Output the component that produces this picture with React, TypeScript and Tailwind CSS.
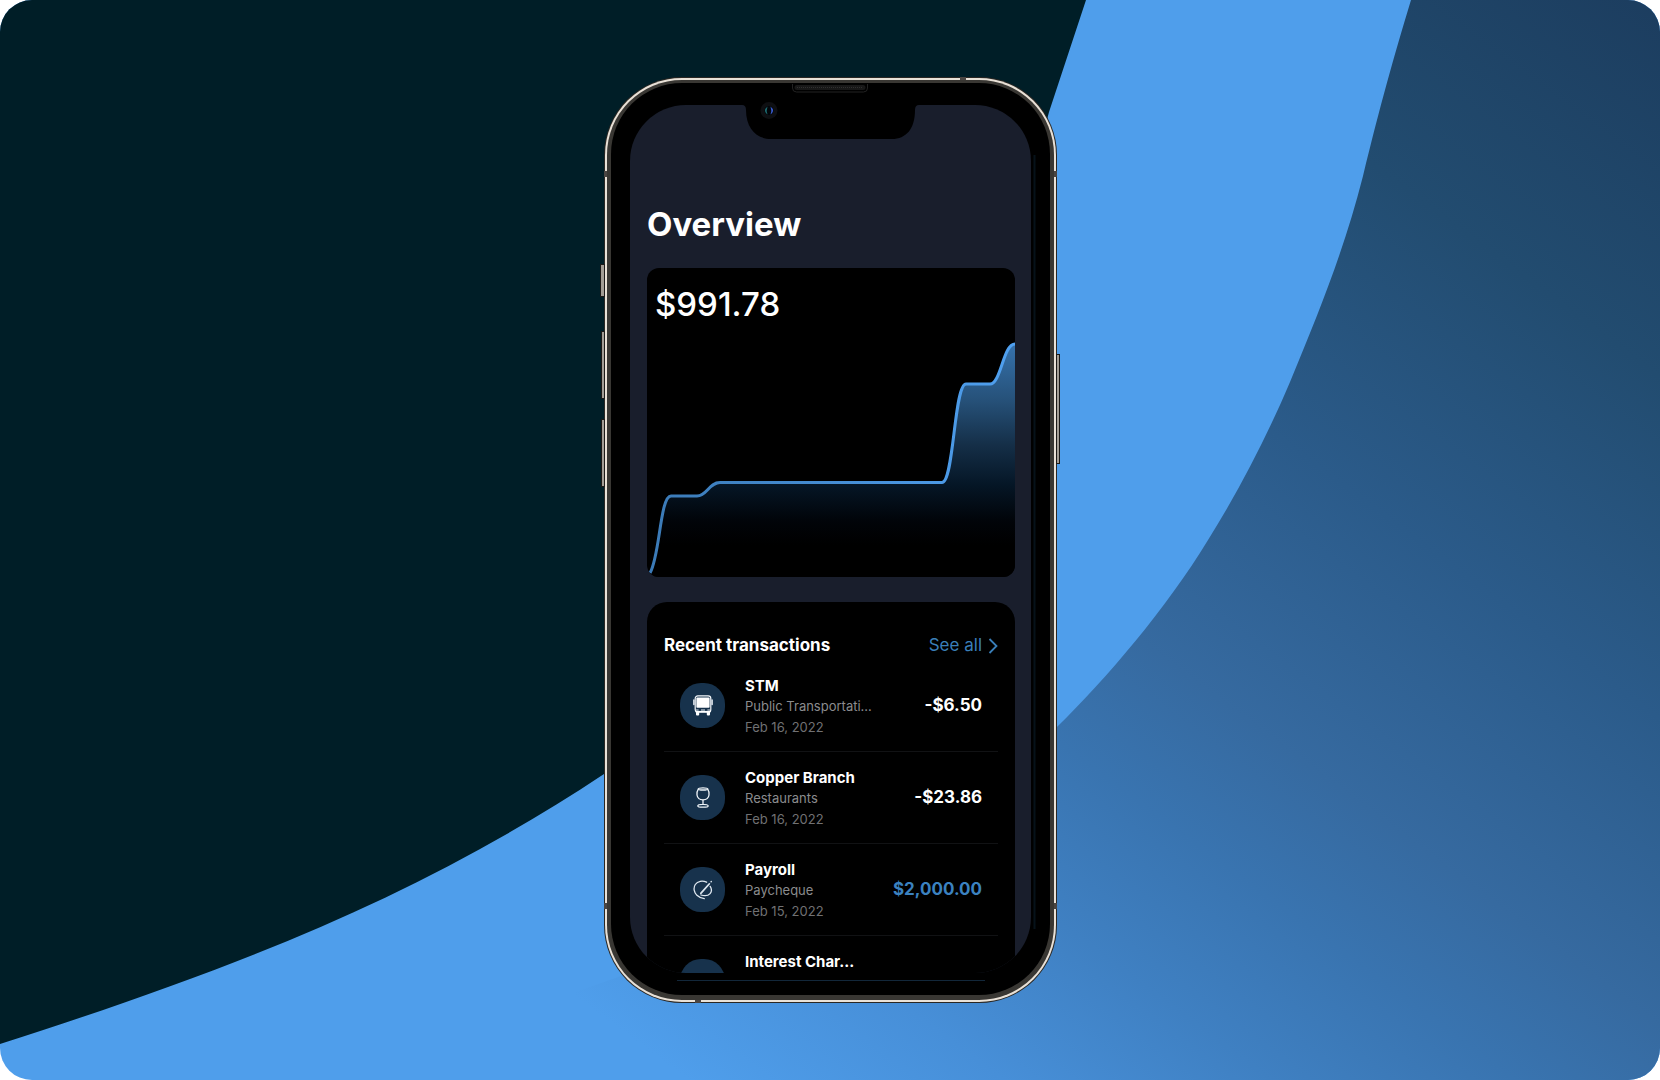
import React from "react";

type Transaction = {
  name: string;
  category?: string;
  date?: string;
  amount?: string;
  credit?: boolean;
  icon?: React.ReactNode;
};

const BusIcon = () => (
  <svg viewBox="0 0 20 21" className="h-[21px] w-5" aria-hidden="true">
    <rect x="2.2" y="0.8" width="15.6" height="16.4" rx="2.6" fill="none" stroke="#f4f7fa" strokeWidth="1.2" />
    <rect x="3.4" y="2.6" width="13.2" height="10.2" rx="0.8" fill="#fff" />
    <path d="M0.900 5v4.400M19.100 5v4.400" stroke="#e4eaf0" strokeWidth="1.500" strokeLinecap="round" />
    <path d="M3 15h2.600M8 15h4M14.400 15H17" stroke="#e4eaf0" strokeWidth="1" />
    <path d="M2.400 16.600h15.200" stroke="#fff" strokeWidth="1.400" />
    <path d="M3 17h3.200v2.600q0 1-1 1H4q-1 0-1-1zM13.800 17H17v2.600q0 1-1 1h-1.200q-1 0-1-1z" fill="#fff" />
  </svg>
);

const GlassIcon = () => (
  <svg viewBox="0 0 20 21" className="h-[21px] w-5" fill="none" stroke="#eef3f7" strokeWidth="1.300" aria-hidden="true">
    <path d="M5.400 1.800C4 4 3.700 6 4 8c.4 2.900 2.900 4.800 6 4.800s5.600-1.900 6-4.800c.3-2 0-4-1.400-6.200" />
    <ellipse cx="10" cy="1.900" rx="4.600" ry="1.100" />
    <path d="M10 12.800v5M4.800 18.900c0-.9 2.300-1.500 5.200-1.500s5.200.6 5.200 1.500-2.300 1.300-5.200 1.300-5.200-.4-5.200-1.300z" />
  </svg>
);

const PenIcon = () => (
  <svg viewBox="0 0 20 20" className="size-5" fill="none" stroke="#dde6ee" strokeWidth="1.300" strokeLinecap="round" aria-hidden="true">
    <path d="M13.600 2.200C9.400.2 4.600 1 2.300 4.500c-2.200 3.500-1.300 8 1.600 10.700 2.100 2 4.700 3 7.400 3.500" />
    <path d="M17.200 6.400c1.500 2.400 1.600 5.200-.1 7.200-1.800 2.100-5.400 2.500-9.200 1.400" />
    <path d="M7.800 13.400l8.600-9.600" strokeWidth="1.700" />
    <path d="M18.100 1.700l.2-.2" strokeWidth="1.500" />
  </svg>
);

const transactions: Transaction[] = [
  { name: "STM", category: "Public Transportati...", date: "Feb 16, 2022", amount: "-$6.50", icon: <BusIcon /> },
  { name: "Copper Branch", category: "Restaurants", date: "Feb 16, 2022", amount: "-$23.86", icon: <GlassIcon /> },
  { name: "Payroll", category: "Paycheque", date: "Feb 15, 2022", amount: "$2,000.00", credit: true, icon: <PenIcon /> },
  { name: "Interest Char..." },
];

function Backdrop() {
  return (
    <svg viewBox="0 0 1660 1080" preserveAspectRatio="none" className="absolute inset-0 h-full w-full" aria-hidden="true">
      <defs>
        <linearGradient id="dusk" gradientUnits="userSpaceOnUse" x1="580" y1="1000" x2="1441" y2="-163">
          <stop offset="0" stopColor="#4f9eeb" />
          <stop offset="0.130" stopColor="#478fd8" />
          <stop offset="0.240" stopColor="#3f80c2" />
          <stop offset="0.340" stopColor="#3974b0" />
          <stop offset="0.430" stopColor="#366aa0" />
          <stop offset="0.600" stopColor="#2b5b8a" />
          <stop offset="0.790" stopColor="#224c70" />
          <stop offset="1" stopColor="#1c3d5f" />
        </linearGradient>
      </defs>
      <rect width="1660" height="1080" fill="#4f9eeb" />
      <path
        d="M1411 0C1394 56 1380 106 1363 176C1344 250 1321 307 1290 382C1268 434 1240 489 1208 540C1166 609 1106 679 1058 726C940 836 780 922 567 995L567 1080H1660V0Z"
        fill="url(#dusk)"
      />
      <path d="M0 0H1086L1049 112C970 420 860 590 604 774C420 896 240 967 0 1044Z" fill="#001e27" />
    </svg>
  );
}

function BalanceChart() {
  return (
    <svg viewBox="0 0 368 247" preserveAspectRatio="none" className="block h-[247px] w-full" role="img" aria-label="Balance over time">
      <defs>
        <linearGradient id="area" x1="0" y1="14" x2="0" y2="215" gradientUnits="userSpaceOnUse">
          <stop offset="0" stopColor="#3672ac" />
          <stop offset="0.280" stopColor="#265179" />
          <stop offset="0.500" stopColor="#152f48" />
          <stop offset="0.700" stopColor="#051626" />
          <stop offset="0.880" stopColor="#010409" />
          <stop offset="1" stopColor="#000" />
        </linearGradient>
        <linearGradient id="line" x1="0" y1="0" x2="368" y2="0" gradientUnits="userSpaceOnUse">
          <stop offset="0" stopColor="#3b7ab6" />
          <stop offset="1" stopColor="#4fa0f0" />
        </linearGradient>
      </defs>
      <path
        d="M3 243C13 226 13 166 24 166H50C60 166 62 152.500 73 152.500H295C307 152.500 307 54 319 54H343C354 54 356 14 368 14V247H3Z"
        fill="url(#area)"
      />
      <path
        d="M3 243C13 226 13 166 24 166H50C60 166 62 152.500 73 152.500H295C307 152.500 307 54 319 54H343C354 54 356 14 368 14"
        fill="none"
        stroke="url(#line)"
        strokeWidth="3"
      />
    </svg>
  );
}

function TransactionRow({ name, category, date, amount, credit, icon }: Transaction) {
  return (
    <li className="flex h-[92px] items-center border-b border-[#111214] px-4">
      <div className="flex size-[45px] shrink-0 items-center justify-center rounded-[21px] bg-[#17324c]">{icon}</div>
      <div className="ml-5 h-[62px]">
        <p className="text-[15px] leading-[21px] font-bold text-white">{name}</p>
        <p className="text-[13px] leading-[21px] text-[#8b8c8e]">{category}</p>
        <p className="text-[13px] leading-5 text-[#707173]">{date}</p>
      </div>
      <p className={`ml-auto text-[17px] font-bold ${credit ? "text-[#3b82c0]" : "text-white"}`}>{amount}</p>
    </li>
  );
}

function Hardware() {
  return (
    <svg viewBox="0 0 461 926" className="pointer-events-none absolute inset-y-0 -left-1 h-full w-[461px]" aria-hidden="true">
      <g fill="#a39d95" stroke="#1c1a18">
        <rect x="0.500" y="187.500" width="4" height="32" />
        <rect x="1.500" y="254.500" width="3" height="67" />
        <rect x="1.500" y="342.500" width="3" height="67" />
        <rect x="456.500" y="277.500" width="3" height="109" />
      </g>
      <path
        d="M360 0h6v3h-6zM95 923h6v3h-6zM4 94h3v6H4zM454 94h3v6h-3zM4 826h3v6H4zM454 826h3v6h-3z"
        fill="#4a4542"
      />
      <path d="M434.500 78V852" stroke="#06121a" strokeWidth="2" />
      <path d="M77 903.500H385" stroke="#12273a" />
      <g transform="translate(141 6)">
        <path d="M0 20H180V22H178Q174 22 174 27C174 46 165 56 151 56H30C16 56 5 46 5 27Q5 22 1 22H0Z" fill="#000" />
        <path d="M51.500 1v4q0 4 4 4h67q4 0 4-4v-4" fill="none" stroke="#222" />
        <rect x="53.500" y="2" width="71" height="5" rx="2.500" fill="#181818" />
        <path d="M56 4.500h66" stroke="#303030" strokeDasharray="1 1" />
        <circle cx="28" cy="27.500" r="8.500" fill="#0e0f12" />
        <circle cx="28" cy="27.500" r="4.500" fill="#02060a" />
        <path d="M26.500 23.500q-5 4 0 8q-1.500-4 0-8z" fill="#1e6b70" />
        <path d="M29.500 23.500q5 4 0 8q1.500-4 0-8z" fill="#3a5cd0" />
      </g>
    </svg>
  );
}

export default function App() {
  return (
    <div className="min-h-screen bg-white font-['Inter',sans-serif]">
      <main className="relative flex min-h-screen items-center justify-center overflow-hidden rounded-[32px] pl-px">
        <Backdrop />
        <div className="relative h-[926px] w-[453px] shrink-0 rounded-[78px] bg-[#2a2723] p-px">
          <div className="h-full rounded-[77px] bg-[#e9e1d7] p-0.5">
            <div className="h-full rounded-[75px] bg-[#393733] px-1 pt-[3px] pb-[5px]">
              <div className="h-full rounded-[71px] bg-black px-[19px] py-[22px]">
                <section className="h-full overflow-hidden rounded-[56px] bg-[#191e2c] pt-[97px] pr-4 pl-[17px]">
                  <h1 className="text-[33px] leading-[44px] font-bold text-white">Overview</h1>
                  <div className="mt-[22px] overflow-hidden rounded-xl bg-black">
                    <p className="px-2 pt-3 pb-0.5 text-[33px] leading-[48px] font-medium text-white">$991.78</p>
                    <BalanceChart />
                  </div>
                  <div className="mt-[25px] rounded-t-[20px] bg-black px-[17px] pt-8">
                    <div className="flex h-6 items-center justify-between">
                      <h2 className="text-[17px] font-bold text-white">Recent transactions</h2>
                      <a href="#all" className="flex items-center gap-1.5 text-[17px] text-[#3a7fb9]">
                        See all
                        <svg viewBox="0 0 10 16" className="h-4 w-2.5" fill="none" stroke="currentColor" strokeWidth="1.800" aria-hidden="true">
                          <path d="M1.500 1l7 7-7 7" />
                        </svg>
                      </a>
                    </div>
                    <ul className="pt-0.5">
                      {transactions.map((t) => (
                        <TransactionRow key={t.name} {...t} />
                      ))}
                    </ul>
                  </div>
                </section>
              </div>
            </div>
          </div>
          <Hardware />
        </div>
      </main>
    </div>
  );
}
